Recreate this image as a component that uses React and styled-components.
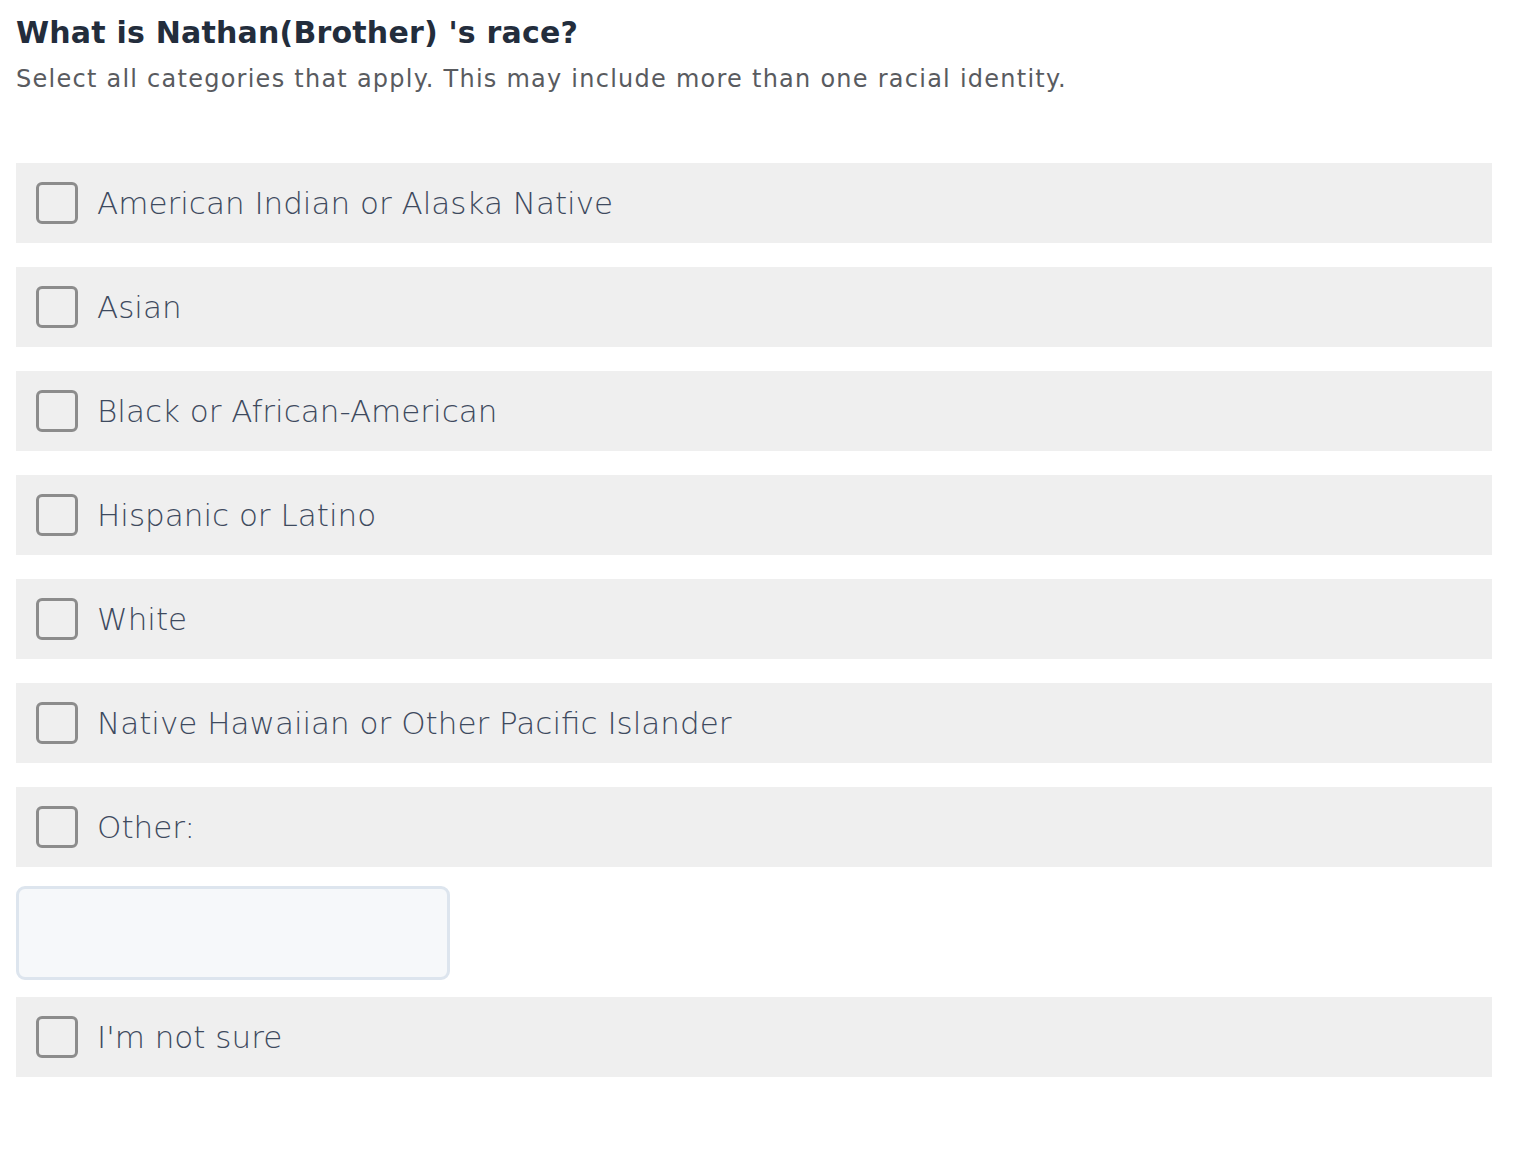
import React from 'react'
import styled, { createGlobalStyle } from 'styled-components'

const GlobalStyle = createGlobalStyle`
    body {
        margin: 0;
        background: #ffffff;
        font-family: "DejaVu Sans", "Open Sans", sans-serif;
    }
`

const options = [
    'American Indian or Alaska Native',
    'Asian',
    'Black or African-American',
    'Hispanic or Latino',
    'White',
    'Native Hawaiian or Other Pacific Islander',
    'Other:',
    "I'm not sure",
]

const Page = styled.main`
    padding: 13px 22px 60px 16px;
`

const Title = styled.h1`
    margin: 0;
    font-size: 30px;
    font-weight: 700;
    letter-spacing: 0.2px;
    color: #232d3c;
    line-height: 40px;
`

const Hint = styled.p`
    margin: 11px 0 0;
    font-size: 24px;
    letter-spacing: 1.25px;
    color: #595b5f;
    line-height: 30px;
`

const OptionList = styled.div`
    display: flex;
    flex-direction: column;
    gap: 24px;
    margin-top: 69px;
`

const OptionRow = styled.label`
    display: flex;
    align-items: center;
    gap: 19px;
    height: 80px;
    padding-left: 20px;
    background: #efefef;
    cursor: pointer;
`

const Box = styled.span`
    width: 42px;
    height: 42px;
    box-sizing: border-box;
    border: 3px solid #8c8c8c;
    border-radius: 6px;
    flex-shrink: 0;
`

const OptionText = styled.span`
    font-size: 31px;
    font-weight: 200;
    color: #3e4a5e;
`

const OtherInput = styled.input`
    width: 434px;
    height: 94px;
    box-sizing: border-box;
    margin: -5px 0 -7px;
    border: 3px solid #dde5ee;
    border-radius: 9px;
    background: #f6f8fa;
    outline: none;
`

const App = () => (
    <Page>
        <GlobalStyle />
        <Title>What is Nathan(Brother) 's race?</Title>
        <Hint>Select all categories that apply. This may include more than one racial identity.</Hint>
        <OptionList>
            {options.map((option) => (
                <React.Fragment key={option}>
                    <OptionRow>
                        <Box />
                        <OptionText>{option}</OptionText>
                    </OptionRow>
                    {option === 'Other:' && <OtherInput type="text" />}
                </React.Fragment>
            ))}
        </OptionList>
    </Page>
)

export default App
